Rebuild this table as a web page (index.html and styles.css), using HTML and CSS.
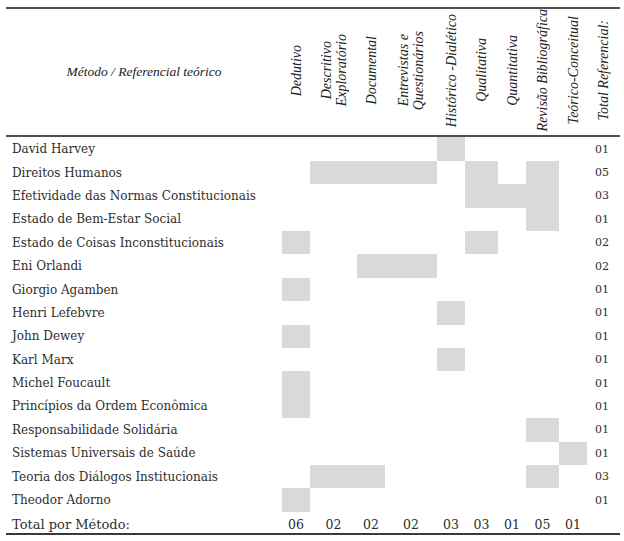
FILE: index.html
```html
<!DOCTYPE html>
<html lang="pt">
<head>
<meta charset="utf-8">
<title>Método / Referencial teórico</title>
<link rel="stylesheet" href="styles.css">
</head>
<body>
<div class="page">
<table class="matrix">
<colgroup>
<col class="c-name"><col class="c28"><col class="c47"><col class="c28"><col class="c52"><col class="c28"><col class="c33"><col class="c28"><col class="c33"><col class="c28"><col class="c33">
</colgroup>
<thead>
<tr>
<th class="corner">Método / Referencial teórico</th>
<th class="vh"><span>Dedutivo</span></th>
<th class="vh"><span>Descritivo<br>Exploratório</span></th>
<th class="vh"><span>Documental</span></th>
<th class="vh"><span>Entrevistas e<br>Questionários</span></th>
<th class="vh"><span>Histórico -Dialético</span></th>
<th class="vh"><span>Qualitativa</span></th>
<th class="vh"><span>Quantitativa</span></th>
<th class="vh"><span>Revisão Bibliográfica</span></th>
<th class="vh"><span>Teórico-Conceitual</span></th>
<th class="vh"><span>Total Referencial:</span></th>
</tr>
</thead>
<tbody>
<tr><td class="name">David Harvey</td><td></td><td></td><td></td><td></td><td class="on"></td><td></td><td></td><td></td><td></td><td class="tot">01</td></tr>
<tr><td class="name">Direitos Humanos</td><td></td><td class="on"></td><td class="on"></td><td class="on"></td><td></td><td class="on"></td><td></td><td class="on"></td><td></td><td class="tot">05</td></tr>
<tr><td class="name">Efetividade das Normas Constitucionais</td><td></td><td></td><td></td><td></td><td></td><td class="on"></td><td class="on"></td><td class="on"></td><td></td><td class="tot">03</td></tr>
<tr><td class="name">Estado de Bem-Estar Social</td><td></td><td></td><td></td><td></td><td></td><td></td><td></td><td class="on"></td><td></td><td class="tot">01</td></tr>
<tr><td class="name">Estado de Coisas Inconstitucionais</td><td class="on"></td><td></td><td></td><td></td><td></td><td class="on"></td><td></td><td></td><td></td><td class="tot">02</td></tr>
<tr><td class="name">Eni Orlandi</td><td></td><td></td><td class="on"></td><td class="on"></td><td></td><td></td><td></td><td></td><td></td><td class="tot">02</td></tr>
<tr><td class="name">Giorgio Agamben</td><td class="on"></td><td></td><td></td><td></td><td></td><td></td><td></td><td></td><td></td><td class="tot">01</td></tr>
<tr><td class="name">Henri Lefebvre</td><td></td><td></td><td></td><td></td><td class="on"></td><td></td><td></td><td></td><td></td><td class="tot">01</td></tr>
<tr><td class="name">John Dewey</td><td class="on"></td><td></td><td></td><td></td><td></td><td></td><td></td><td></td><td></td><td class="tot">01</td></tr>
<tr><td class="name">Karl Marx</td><td></td><td></td><td></td><td></td><td class="on"></td><td></td><td></td><td></td><td></td><td class="tot">01</td></tr>
<tr><td class="name">Michel Foucault</td><td class="on"></td><td></td><td></td><td></td><td></td><td></td><td></td><td></td><td></td><td class="tot">01</td></tr>
<tr><td class="name">Princípios da Ordem Econômica</td><td class="on"></td><td></td><td></td><td></td><td></td><td></td><td></td><td></td><td></td><td class="tot">01</td></tr>
<tr><td class="name">Responsabilidade Solidária</td><td></td><td></td><td></td><td></td><td></td><td></td><td></td><td class="on"></td><td></td><td class="tot">01</td></tr>
<tr><td class="name">Sistemas Universais de Saúde</td><td></td><td></td><td></td><td></td><td></td><td></td><td></td><td></td><td class="on"></td><td class="tot">01</td></tr>
<tr><td class="name">Teoria dos Diálogos Institucionais</td><td></td><td class="on"></td><td class="on"></td><td></td><td></td><td></td><td></td><td class="on"></td><td></td><td class="tot">03</td></tr>
<tr><td class="name">Theodor Adorno</td><td class="on"></td><td></td><td></td><td></td><td></td><td></td><td></td><td></td><td></td><td class="tot">01</td></tr>
</tbody>
<tfoot>
<tr class="sum"><td class="name">Total por Método:</td><td>06</td><td>02</td><td>02</td><td>02</td><td>03</td><td>03</td><td>01</td><td>05</td><td>01</td><td></td></tr>
</tfoot>
</table>
</div>
</body>
</html>
```
FILE: styles.css
```css
html, body {
  margin: 0;
  padding: 0;
  background: #ffffff;
}

.page {
  padding: 7px 4px 0 6px;
}

.matrix {
  border-collapse: collapse;
  table-layout: fixed;
  width: 614px;
  color: #2e2e2e;
  font-family: "DejaVu Serif", serif;
  font-size: 12px;
}

.c-name { width: 276px; }
.c28 { width: 28px; }
.c33 { width: 33px; }
.c47 { width: 47px; }
.c52 { width: 52px; }

.matrix th,
.matrix td {
  padding: 0;
}

.matrix thead th {
  height: 126px;
  border-top: 2px solid #505050;
  border-bottom: 2px solid #505050;
  font-family: "Liberation Serif", serif;
  font-style: italic;
  font-weight: normal;
  font-size: 13.5px;
  color: #222;
  vertical-align: middle;
  text-align: center;
}

.vh span {
  display: inline-block;
  writing-mode: vertical-rl;
  transform: rotate(180deg);
  line-height: 15px;
  font-size: 14px;
  white-space: nowrap;
}

.matrix tbody td {
  height: 23.4px;
  vertical-align: middle;
}

.matrix td.name {
  padding-left: 6px;
  text-align: left;
  white-space: nowrap;
}

.matrix td.on {
  background: #d9d9d9;
}

.matrix td.tot {
  text-align: center;
  padding-right: 3px;
  font-size: 11px;
}

.matrix tfoot tr.sum td {
  height: 20px;
  border-bottom: 2px solid #3a3a3a;
  text-align: center;
  vertical-align: bottom;
  padding-bottom: 1px;
  font-size: 12.5px;
}

.matrix tfoot tr.sum td.name {
  text-align: left;
  font-size: 13px;
}
```
